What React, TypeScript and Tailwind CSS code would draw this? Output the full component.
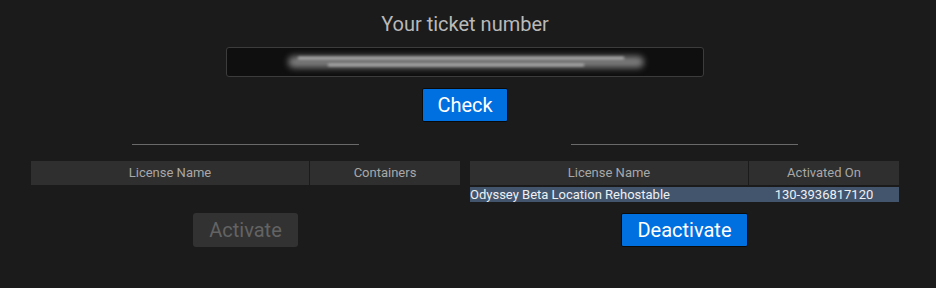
import React from 'react'

const font = { fontFamily: 'Roboto, "Liberation Sans", sans-serif' }

function Table({ cols, rows }: { cols: [string, string]; rows: [string, string][] }) {
  return (
    <div className="w-[429px]">
      <div className="flex h-[24px] bg-[#2f2f2f] text-[13px] text-[#a8a8a8]">
        <div className="w-[279px] flex items-center justify-center border-r border-[#1b1b1b]">{cols[0]}</div>
        <div className="flex-1 flex items-center justify-center">{cols[1]}</div>
      </div>
      <div className="mt-[2px] h-[15px]">
        {rows.map((r, i) => (
          <div key={i} className="flex h-[15px] bg-[#42556d] text-[13px] leading-[15px] text-[#eef0f2]">
            <div className="w-[279px] whitespace-nowrap">{r[0]}</div>
            <div className="flex-1 text-center">{r[1]}</div>
          </div>
        ))}
      </div>
    </div>
  )
}

export default function App() {
  return (
    <div className="w-[936px] h-[288px] bg-[#1b1b1b] overflow-hidden" style={font}>
      <div className="w-[930px] flex flex-col items-center pt-[11px]">
        <div className="text-[20px] leading-[26px] text-[#b9b9b9]">Your ticket number</div>
        <div className="mt-[10px] w-[478px] h-[30px] rounded-[3px] border border-[#3c3c3c] bg-[#0f0f0f] flex items-center justify-center overflow-hidden">
          <div className="relative h-[16px] w-[356px] ml-[2px]">
            <div className="absolute inset-x-0 top-[2px] h-[12px] rounded-full bg-[#7a7a7a] blur-[3px]" />
            <div className="absolute left-[10px] right-[20px] top-[3px] h-[2px] bg-[#d0d0d0] blur-[1.5px]" />
            <div className="absolute left-[40px] right-[60px] top-[10px] h-[2px] bg-[#c8c8c8] blur-[1.5px]" />
          </div>
        </div>
        <button className="mt-[11px] w-[86px] h-[34px] rounded-[2px] border border-[#0a0a0a] bg-[#0070e0] text-[20px] text-white">
          Check
        </button>
      </div>
      <div className="flex pl-[31px] gap-[10px] mt-[22px]">
        <div className="flex flex-col items-center">
          <div className="w-[227px] h-px bg-[#6a6a6a]" />
          <div className="mt-[16px]"><Table cols={['License Name', 'Containers']} rows={[]} /></div>
          <button className="mt-[11px] w-[105px] h-[34px] rounded-[3px] bg-[#323232] text-[20px] text-[#636363]">Activate</button>
        </div>
        <div className="flex flex-col items-center">
          <div className="w-[227px] h-px bg-[#6a6a6a]" />
          <div className="mt-[16px]">
            <Table cols={['License Name', 'Activated On']} rows={[['Odyssey Beta Location Rehostable', '130-3936817120']]} />
          </div>
          <button className="mt-[11px] w-[127px] h-[34px] rounded-[2px] border border-[#0a0a0a] bg-[#0070e0] text-[20px] text-white">Deactivate</button>
        </div>
      </div>
    </div>
  )
}
